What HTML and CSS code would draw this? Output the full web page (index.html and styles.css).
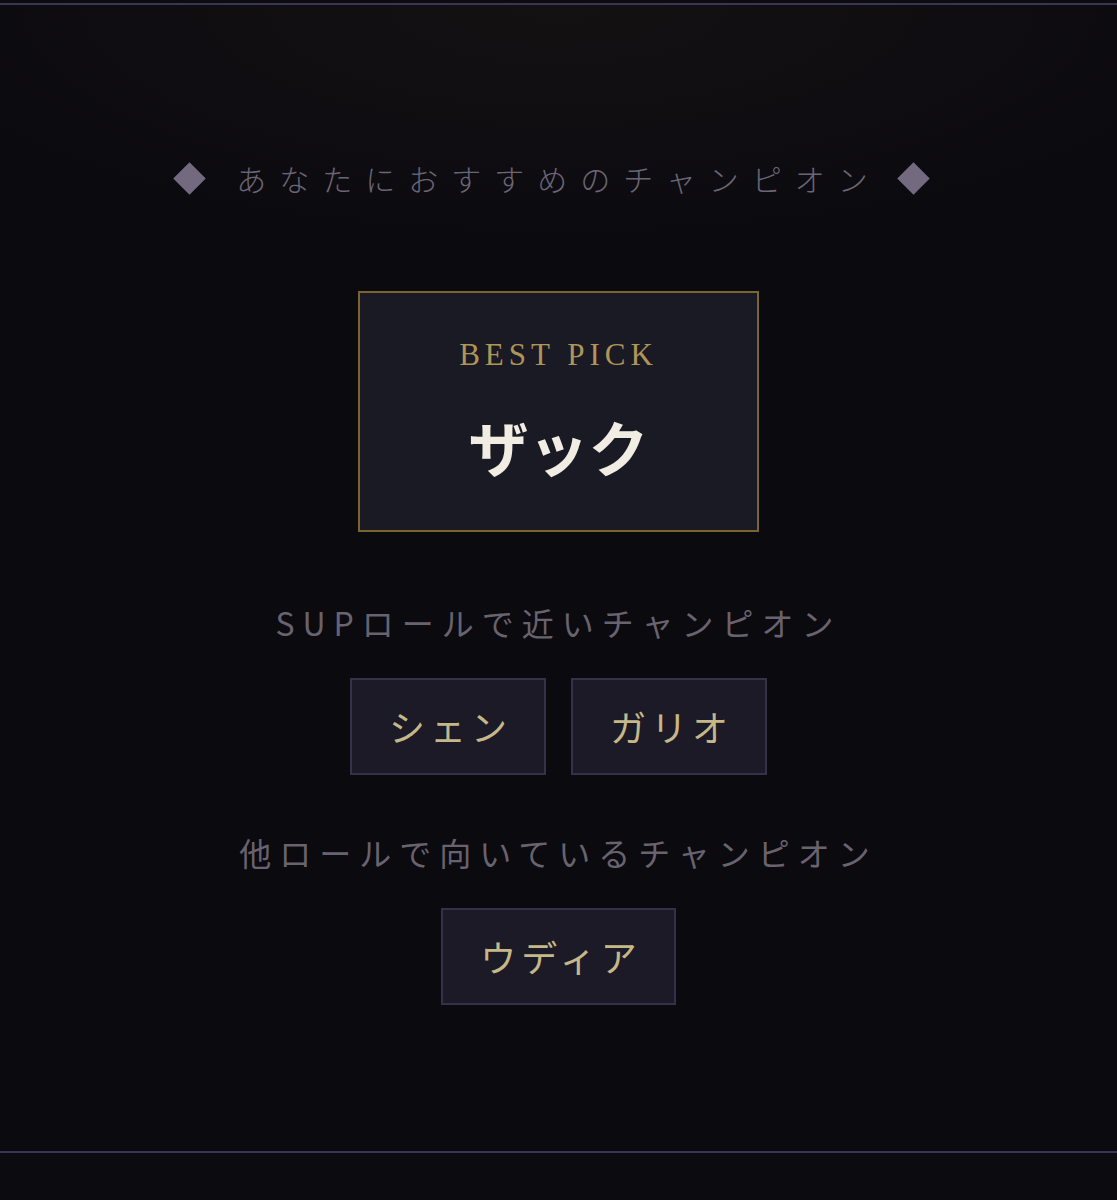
FILE: index.html
```html
<!DOCTYPE html>
<html lang="ja">
<head>
    <meta charset="UTF-8">
    <meta name="viewport" content="width=device-width, initial-scale=1.0">
    <link rel="stylesheet" href="styles.css">
    <title>診断結果</title>
</head>
<body>

    <div class="frame">
        <div class="result">
            <div class="result-title">
                <span class="diamond"></span>
                <h2>あなたにおすすめのチャンピオン</h2>
                <span class="diamond"></span>
            </div>

            <!-- Best pick card -->
            <div class="best-pick">
                <p class="best-label">BEST PICK</p>
                <p class="best-name">ザック</p>
            </div>

            <p class="sub-title">SUPロールで近いチャンピオン</p>
            <div class="champ-list">
                <span class="champ">シェン</span>
                <span class="champ">ガリオ</span>
            </div>

            <p class="sub-title">他ロールで向いているチャンピオン</p>
            <div class="champ-list">
                <span class="champ">ウディア</span>
            </div>
        </div>
    </div>

</body>
</html>
```

FILE: styles.css
```css
body {
    margin: 0;
    background-color: #0c0b10;
    font-family: 'Noto Sans CJK JP', 'Noto Sans', sans-serif;
}

.frame {
    margin-top: 3px;
    height: 1146px;
    border-top: 2px solid #3a3651;
    border-bottom: 2px solid #3a3651;
    background-color: #0b0a0f;
    background-image: radial-gradient(ellipse 700px 240px at 50% 0, rgba(22, 19, 19, 0.8), rgba(11, 10, 15, 0) 100%);
}

.result {
    display: flex;
    flex-direction: column;
    align-items: center;
    padding-top: 153px;
}

/* Section title with diamonds */
.result-title {
    display: flex;
    align-items: center;
    height: 40px;
    margin-left: -14px;
}

.result-title h2 {
    margin: 0 21px 0 35px;
    font-size: 30px;
    font-weight: 300;
    letter-spacing: 13px;
    line-height: 40px;
    color: #6c6576;
}

.diamond {
    width: 23px;
    height: 23px;
    background-color: #736a7f;
    transform: rotate(45deg);
}

/* Best pick card */
.best-pick {
    box-sizing: border-box;
    width: 401px;
    height: 241px;
    margin-top: 93px;
    padding-top: 44px;
    border: 2px solid #7b6430;
    background-color: #1a1a25;
    text-align: center;
}

.best-label {
    margin: 0;
    font-family: 'Liberation Serif', serif;
    font-size: 31px;
    letter-spacing: 5px;
    line-height: 36px;
    color: #b19457;
}

.best-name {
    margin: 38px 0 0;
    font-size: 60px;
    font-weight: 700;
    line-height: 70px;
    color: #f1ede2;
}

/* Other candidates */
.sub-title {
    margin: 68px 0 0;
    font-size: 32px;
    letter-spacing: 8px;
    line-height: 44px;
    color: #69626f;
}

.sub-title + .champ-list + .sub-title {
    margin-top: 55px;
}

.champ-list {
    display: flex;
    gap: 25px;
    margin-top: 34px;
}

.champ {
    box-sizing: border-box;
    height: 97px;
    padding: 0 32px 0 37px;
    border: 2px solid #34314a;
    background-color: #1b1a26;
    font-size: 36px;
    letter-spacing: 5px;
    line-height: 93px;
    color: #c6b789;
}
```
